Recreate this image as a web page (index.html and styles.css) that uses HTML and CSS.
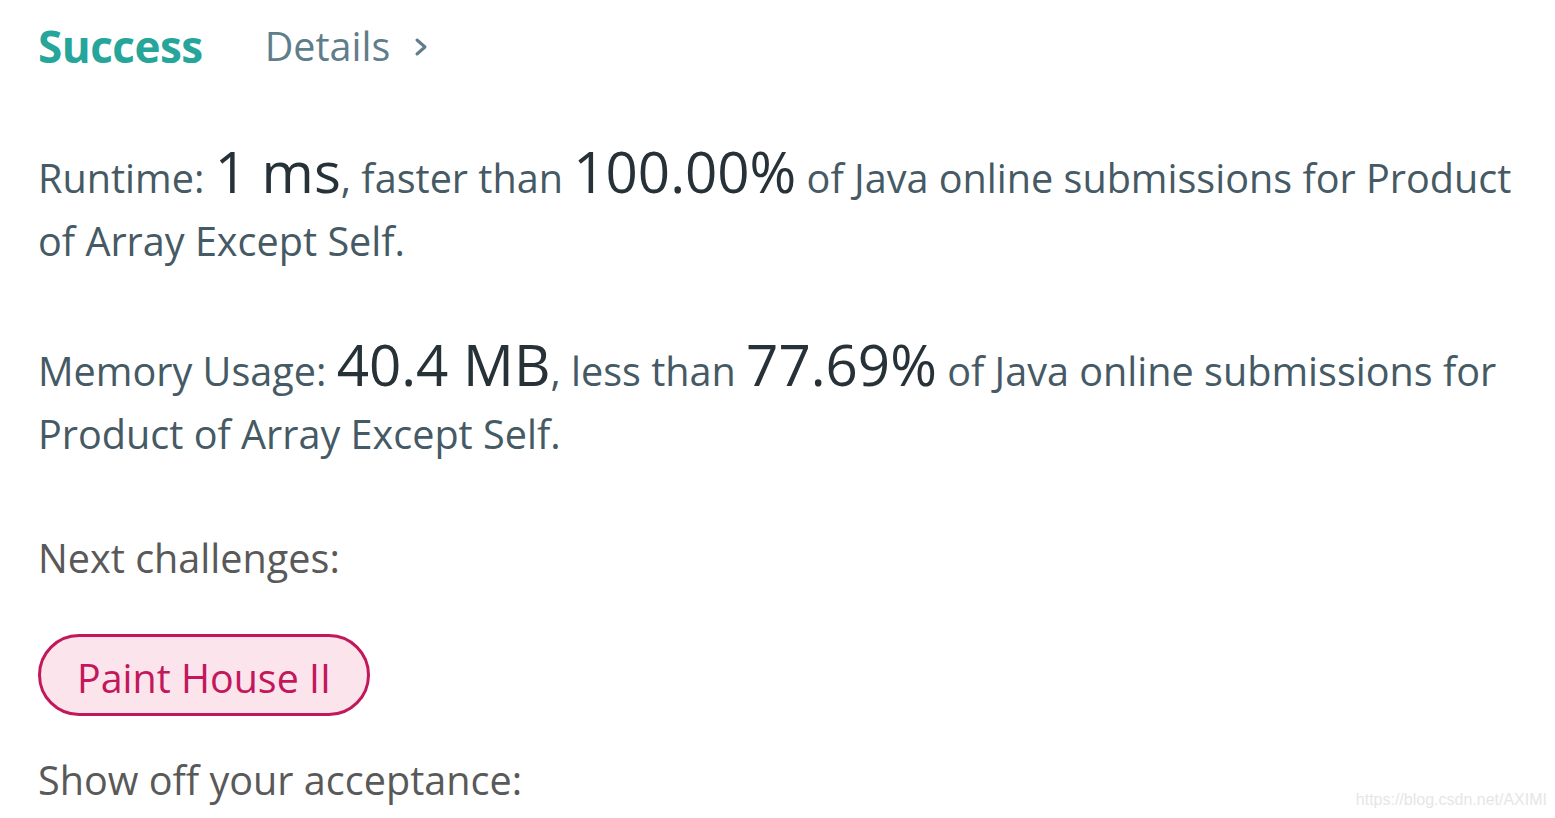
FILE: index.html
```html
<!DOCTYPE html>
<html lang="en">
<head>
<meta charset="utf-8">
<title>Success</title>
<link rel="stylesheet" href="styles.css">
</head>
<body>
<main class="page">
  <div class="header">
    <span class="status">Success</span>
    <a class="details">Details
      <svg class="chev" viewBox="0 0 14 20" width="14" height="20"><path d="M3 3 L11 10 L3 17" fill="none" stroke="currentColor" stroke-width="3" stroke-linecap="round" stroke-linejoin="round"/></svg>
    </a>
  </div>
  <p class="result">Runtime: <span class="big">1 ms</span>, faster than <span class="big">100.00%</span> of Java online submissions for Product of Array Except Self.</p>
  <p class="result">Memory Usage: <span class="big">40.4 MB</span>, less than <span class="big">77.69%</span> of Java online submissions for Product of Array Except Self.</p>
  <p class="label">Next challenges:</p>
  <div class="challenges"><a class="pill">Paint House II</a></div>
  <p class="label share">Show off your acceptance:</p>
</main>
<div class="watermark">https://blog.csdn.net/AXIMI</div>
</body>
</html>
```
FILE: styles.css
```css
html, body {
  margin: 0;
  padding: 0;
  background: #ffffff;
}
body {
  font-family: "Open Sans", "Noto Sans", sans-serif;
  width: 1555px;
  height: 818px;
  overflow: hidden;
  position: relative;
}
.page {
  padding: 16px 0 0 38px;
  width: 1497px;
}
.header {
  display: flex;
  align-items: center;
  gap: 62px;
  height: 60px;
}
.status {
  font-size: 44px;
  line-height: 60px;
  font-weight: 700;
  color: #26a69a;
  letter-spacing: -0.5px;
}
.details {
  display: flex;
  align-items: center;
  gap: 24px;
  font-size: 39.5px;
  line-height: 60px;
  color: #607d8b;
}
.chev { display: block; margin-top: 2px; }
.result {
  margin: 71px 0 0 0;
  font-size: 39.6px;
  line-height: 63px;
  color: #455a64;
}
.result + .result { margin-top: 67px; }
.big {
  font-size: 56.5px;
  line-height: 40px;
  color: #263238;
}
.label {
  margin: 66px 0 0 0;
  font-size: 39.6px;
  line-height: 52px;
  color: #595959;
}
.challenges {
  margin-top: 50px;
  display: flex;
}
.pill {
  box-sizing: border-box;
  display: inline-flex;
  align-items: center;
  height: 82px;
  padding: 5px 36px 0 36px;
  border: 3px solid #c2185b;
  border-radius: 41px;
  background: #fce4ec;
  color: #c2185b;
  font-size: 39.4px;
}
.share { margin-top: 38px; }
.watermark {
  position: absolute;
  right: 8px;
  bottom: 9px;
  font-family: "Liberation Sans", Arial, sans-serif;
  font-size: 16px;
  color: #e6e6e6;
}
```
